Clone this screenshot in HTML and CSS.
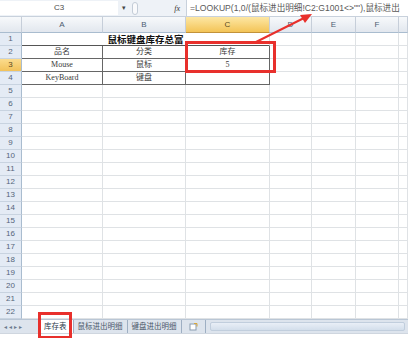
FILE: index.html
```html
<!DOCTYPE html>
<html lang="zh-CN">
<head>
<meta charset="utf-8">
<title>鼠标键盘库存总富</title>
<link rel="stylesheet" href="styles.css">
</head>
<body>
<div class="app">
  <div class="fbar">
    <div class="namebox">C3</div>
    <div class="dd">▾</div>
    <div class="grip"></div>
    <div class="fx">fx</div>
    <div class="formula">=LOOKUP(1,0/(鼠标进出明细!C2:G1001&lt;&gt;""),鼠标进出</div>
  </div>

  <div class="sheet">
    <div class="corner"></div><div class="ch">A</div><div class="ch">B</div><div class="ch sel">C</div><div class="ch">D</div><div class="ch">E</div><div class="ch">F</div><div class="ch"></div>

    <div class="rh">1</div><div class="c title">鼠标键盘库存总富</div><div class="c"></div><div class="c"></div><div class="c"></div><div class="c"></div>
    <div class="rh">2</div><div class="c t">品名</div><div class="c t">分类</div><div class="c t">库存</div><div class="c"></div><div class="c"></div><div class="c"></div><div class="c"></div>
    <div class="rh sel">3</div><div class="c t">Mouse</div><div class="c t">鼠标</div><div class="c t">5</div><div class="c"></div><div class="c"></div><div class="c"></div><div class="c"></div>
    <div class="rh">4</div><div class="c t">KeyBoard</div><div class="c t">键盘</div><div class="c t"></div><div class="c"></div><div class="c"></div><div class="c"></div><div class="c"></div>
    <div class="rh">5</div><div class="c"></div><div class="c"></div><div class="c"></div><div class="c"></div><div class="c"></div><div class="c"></div><div class="c"></div>
    <div class="rh">6</div><div class="c"></div><div class="c"></div><div class="c"></div><div class="c"></div><div class="c"></div><div class="c"></div><div class="c"></div>
    <div class="rh">7</div><div class="c"></div><div class="c"></div><div class="c"></div><div class="c"></div><div class="c"></div><div class="c"></div><div class="c"></div>
    <div class="rh">8</div><div class="c"></div><div class="c"></div><div class="c"></div><div class="c"></div><div class="c"></div><div class="c"></div><div class="c"></div>
    <div class="rh">9</div><div class="c"></div><div class="c"></div><div class="c"></div><div class="c"></div><div class="c"></div><div class="c"></div><div class="c"></div>
    <div class="rh">10</div><div class="c"></div><div class="c"></div><div class="c"></div><div class="c"></div><div class="c"></div><div class="c"></div><div class="c"></div>
    <div class="rh">11</div><div class="c"></div><div class="c"></div><div class="c"></div><div class="c"></div><div class="c"></div><div class="c"></div><div class="c"></div>
    <div class="rh">12</div><div class="c"></div><div class="c"></div><div class="c"></div><div class="c"></div><div class="c"></div><div class="c"></div><div class="c"></div>
    <div class="rh">13</div><div class="c"></div><div class="c"></div><div class="c"></div><div class="c"></div><div class="c"></div><div class="c"></div><div class="c"></div>
    <div class="rh">14</div><div class="c"></div><div class="c"></div><div class="c"></div><div class="c"></div><div class="c"></div><div class="c"></div><div class="c"></div>
    <div class="rh">15</div><div class="c"></div><div class="c"></div><div class="c"></div><div class="c"></div><div class="c"></div><div class="c"></div><div class="c"></div>
    <div class="rh">16</div><div class="c"></div><div class="c"></div><div class="c"></div><div class="c"></div><div class="c"></div><div class="c"></div><div class="c"></div>
    <div class="rh">17</div><div class="c"></div><div class="c"></div><div class="c"></div><div class="c"></div><div class="c"></div><div class="c"></div><div class="c"></div>
    <div class="rh">18</div><div class="c"></div><div class="c"></div><div class="c"></div><div class="c"></div><div class="c"></div><div class="c"></div><div class="c"></div>
    <div class="rh">19</div><div class="c"></div><div class="c"></div><div class="c"></div><div class="c"></div><div class="c"></div><div class="c"></div><div class="c"></div>
    <div class="rh">20</div><div class="c"></div><div class="c"></div><div class="c"></div><div class="c"></div><div class="c"></div><div class="c"></div><div class="c"></div>
    <div class="rh">21</div><div class="c"></div><div class="c"></div><div class="c"></div><div class="c"></div><div class="c"></div><div class="c"></div><div class="c"></div>
    <div class="rh">22</div><div class="c"></div><div class="c"></div><div class="c"></div><div class="c"></div><div class="c"></div><div class="c"></div><div class="c"></div>
  </div>

  <div class="tabbar">
    <div class="nav"><span>◂</span><span>◂</span><span>▸</span><span>▸</span></div>
    <div class="tab active">库存表</div>
    <div class="tab">鼠标进出明细</div>
    <div class="tab">键盘进出明细</div>
    <div class="tab newtab">
      <svg width="9" height="8" viewBox="0 0 9 8"><rect x="1" y="1" width="6" height="6" fill="#fff" stroke="#8a9bb0"/><path d="M5 0.5h3v3" fill="none" stroke="#d9a63a"/></svg>
    </div>
    <div class="hscroll"></div>
  </div>
  <div class="footer"></div>

  <div class="mark cellmark"></div>
  <div class="mark tabmark"></div>
  <svg class="arrow" width="408" height="338" viewBox="0 0 408 338">
    <line x1="254" y1="43" x2="304" y2="18" stroke="#e8302c" stroke-width="2"/>
    <polygon points="312,14 300,15 305,23" fill="#e8302c"/>
  </svg>
</div>
</body>
</html>
```

FILE: styles.css
```css
html, body {
  margin: 0;
  padding: 0;
}
body {
  width: 408px;
  height: 338px;
  overflow: hidden;
  background: #fff;
  font-family: "Liberation Serif", "Noto Sans CJK SC", serif;
}
.app {
  position: relative;
  width: 408px;
  height: 338px;
  display: flex;
  flex-direction: column;
  overflow: hidden;
}

/* formula bar */
.fbar {
  height: 17px;
  flex: none;
  display: flex;
  align-items: center;
  background: #eef2f7;
  border-bottom: 1px solid #c8d1dc;
  box-sizing: border-box;
  font-size: 8px;
  color: #505a66;
}
.namebox {
  width: 118px;
  height: 14px;
  background: #fff;
  text-align: center;
  line-height: 14px;
  font-family: "Liberation Sans", sans-serif;
  color: #4a4a4a;
  font-size: 8px;
}
.dd {
  width: 12px;
  text-align: center;
  font-size: 7px;
  color: #444;
}
.grip {
  width: 4px;
  height: 11px;
  margin-left: 2px;
  border: 1px solid #c3ccd7;
  border-radius: 3px;
  background: #f9fafc;
}
.fx {
  width: 48px;
  text-align: right;
  padding-right: 6px;
  box-sizing: border-box;
  font-style: italic;
  font-family: "Liberation Serif", serif;
  font-size: 8px;
  color: #333;
}
.formula {
  flex: 1;
  height: 100%;
  background: #fff;
  border-left: 1px solid #c8d1dc;
  padding-left: 3px;
  white-space: nowrap;
  overflow: hidden;
  line-height: 16px;
  font-size: 8.6px;
  color: #5a5a5a;
  font-family: "Liberation Sans", "Noto Sans CJK SC", sans-serif;
}

/* sheet grid */
.sheet {
  flex: none;
  display: grid;
  grid-template-columns: 22px 81px 83px 84px 42px 44px 43px 9px;
  grid-template-rows: 16px repeat(22, 13px);
}
.sheet > div {
  box-sizing: border-box;
  overflow: hidden;
  white-space: nowrap;
}
.corner, .ch {
  background: linear-gradient(#f7f9fb, #e2e7ee);
  border-right: 1px solid #c6ced9;
  border-bottom: 1px solid #a9bccf;
  font-family: "Liberation Sans", sans-serif;
  font-size: 8px;
  color: #4c5c70;
  text-align: center;
  line-height: 15px;
}
.ch.sel {
  background: linear-gradient(#fde7a4, #f3c457);
  border-bottom-color: #c2923a;
  color: #5a4a22;
}
.rh {
  background: #e4ebf5;
  border-right: 1px solid #a9bccf;
  border-bottom: 1px solid #c8d3e0;
  font-family: "Liberation Sans", sans-serif;
  font-size: 8px;
  color: #55657a;
  text-align: center;
  line-height: 12px;
}
.rh.sel {
  background: linear-gradient(#fbdc8e, #f2c25a);
  color: #5a4a22;
}
.c {
  border-right: 1px solid #dfe2e5;
  border-bottom: 1px solid #dfe2e5;
  font-size: 8px;
  line-height: 12px;
  text-align: center;
  color: #333;
}
.sheet > .title {
  grid-column: span 3;
  font-weight: bold;
  font-size: 9.5px;
  line-height: 12px;
  overflow: visible;
  color: #111;
  border-bottom: 1px solid #555;
  font-family: "Noto Sans CJK SC", sans-serif;
}
.t {
  border-right: 1px solid #666;
  border-bottom: 1px solid #666;
  font-family: "Liberation Serif", "Noto Sans CJK SC", serif;
  color: #3a3a3a;
}

/* sheet tabs */
.tabbar {
  flex: none;
  height: 14px;
  display: flex;
  align-items: stretch;
  background: #dde4ed;
  border-top: 1px solid #b9c6d5;
  box-sizing: border-box;
  font-size: 7.5px;
  font-family: "Noto Sans CJK SC", sans-serif;
  color: #4a5768;
}
.nav {
  width: 38px;
  display: flex;
  align-items: center;
  gap: 2px;
  padding-left: 4px;
  box-sizing: border-box;
  font-size: 6px;
  color: #6b7a8c;
}
.tab {
  position: relative;
  padding: 0 4px;
  line-height: 12px;
  border-right: 1px solid #9eafc3;
}
.tab.active {
  background: #fff;
  color: #2b3a4c;
  padding: 0 6px;
}
.newtab {
  display: flex;
  align-items: center;
  padding: 0 7px;
}
.hscroll {
  flex: 1;
  margin: 2px 3px 2px 4px;
  background: linear-gradient(#e9eff7, #d3deeb);
  border: 1px solid #c1cedd;
  border-radius: 2px;
}
.footer {
  flex: 1;
  background: #fff;
  border-top: 1px solid #cfd6df;
}

/* annotations */
.mark {
  position: absolute;
  border: 3px solid #e8302c;
  box-sizing: border-box;
}
.cellmark {
  left: 185px;
  top: 41px;
  width: 91px;
  height: 32px;
}
.tabmark {
  left: 38px;
  top: 312px;
  width: 34px;
  height: 27px;
}
.arrow {
  position: absolute;
  left: 0;
  top: 0;
  pointer-events: none;
}
```
